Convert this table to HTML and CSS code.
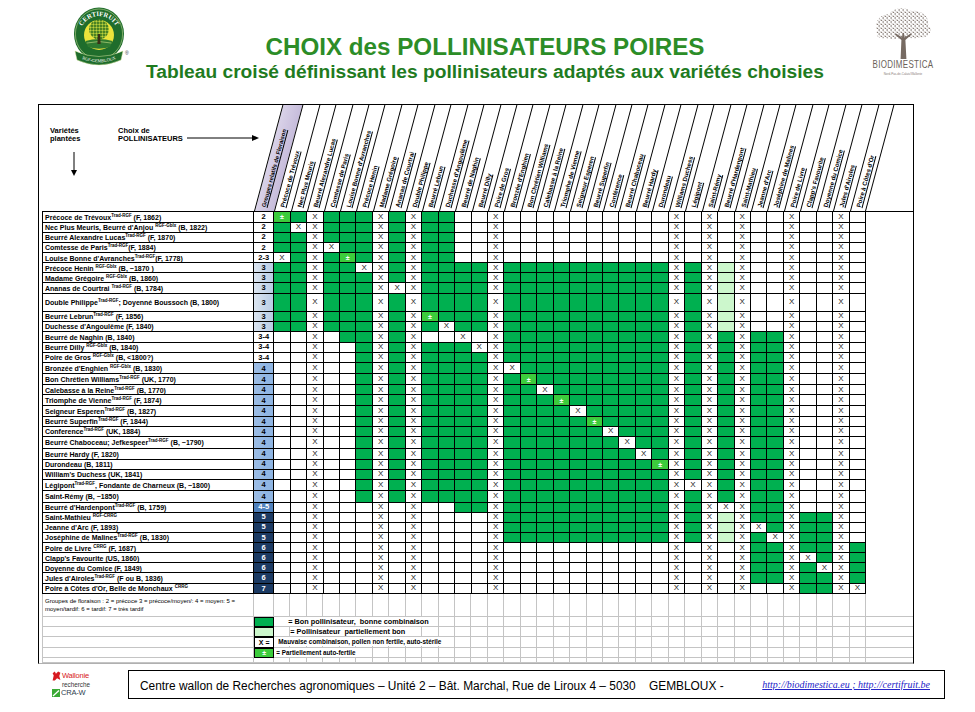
FILE: index.html
```html
<!DOCTYPE html>
<html lang="fr">
<head>
<meta charset="utf-8">
<title>Choix des pollinisateurs poires</title>
<link rel="stylesheet" href="styles.css">
</head>
<body>
<header class="top">
  <div class="logo-cf">
    <svg class="cf" viewBox="0 0 52 60" width="52" height="60">
      <defs>
        <pattern id="lv" width="3" height="3" patternUnits="userSpaceOnUse">
          <rect width="3" height="3" fill="#86ad2e"/>
          <circle cx="1" cy="1" r="0.9" fill="#2f6e1f"/>
          <circle cx="2.3" cy="2.3" r="0.6" fill="#d3dc45"/>
        </pattern>
        <path id="arcT" d="M7 28 A19 19 0 0 1 45 28"/>
        <path id="arcB" d="M8 51.5 Q26 59 44 51.5"/>
      </defs>
      <ellipse cx="26" cy="27" rx="25" ry="26.5" fill="#1f6d2c"/>
      <ellipse cx="26" cy="27" rx="23.6" ry="25" fill="none" stroke="#d9e6a0" stroke-width="0.5"/>
      <circle cx="26" cy="28" r="15" fill="#ebe33b"/>
      <path d="M12.5 34 Q26 30 39.5 34 L37 40 Q26 43.5 15 40 Z" fill="#2e7a30"/>
      <path d="M14 36 Q26 33 38 36" stroke="#cfe08a" stroke-width="0.6" fill="none"/>
      <circle cx="26" cy="22.5" r="10" fill="url(#lv)"/>
      <path d="M25 27 h2 l0.6 10 h-3.2z" fill="#3c3015"/>
      <text font-family="Liberation Serif, serif" font-size="6.6" font-weight="700" fill="#fff"><textPath href="#arcT" startOffset="50%" text-anchor="middle">CERTIFRUIT</textPath></text>
      <path d="M2 44 Q26 55 50 44 L48 53 Q26 63 4 53 Z" fill="#1f6d2c" stroke="#d9e6a0" stroke-width="0.5"/>
      <text font-family="Liberation Serif, serif" font-size="4.4" fill="#fff"><textPath href="#arcB" startOffset="50%" text-anchor="middle">RGF-GEMBLOUX</textPath></text>
    </svg>
    <span class="reg">®</span>
  </div>
  <div class="titles">
    <h1>CHOIX des POLLINISATEURS POIRES</h1>
    <h2>Tableau croisé définissant les pollinisateurs adaptés aux variétés choisies</h2>
  </div>
  <div class="logo-bd">
    <svg class="bd" viewBox="0 0 62 52" width="62" height="52">
      <defs>
        <pattern id="lf" width="4" height="4" patternUnits="userSpaceOnUse">
          <ellipse cx="1.3" cy="1.2" rx="1.1" ry="0.6" fill="#857a72" transform="rotate(30 1.3 1.2)"/>
          <circle cx="3.1" cy="3.1" r="0.75" fill="#6c615a"/>
          <circle cx="3.2" cy="0.8" r="0.4" fill="#9a8f88"/>
        </pattern>
      </defs>
      <path d="M5 24 C1 15 9 7 17 7 C21 1 33 0 39 4 C47 2 58 9 56 17 C62 23 57 32 48 30 C42 33 36 30 31 31 C25 32 20 33 14 31 C7 32 3 29 5 24Z" fill="url(#lf)"/>
      <path d="M28.6 52 L29.4 33 L23 27.5 L24 26.6 L30 30.5 L30.6 26 L32 26 L32.6 30.5 L38.6 26.6 L39.6 27.5 L33.4 33 L34.4 52 Z" fill="#766a62"/>
    </svg>
    <span class="bd-name">BIODIMESTICA</span>
    <span class="bd-tag">Nord-Pas-de-Calais/Wallonie</span>
  </div>
</header>

<main class="sheet">
  <div class="hdr">
    <div class="hname">
      <div class="hv">
        <p>Variétés<br>plantées</p>
        <svg class="down" width="6" height="24" viewBox="0 0 6 24"><path d="M3 0 V19" stroke="#000" stroke-width="1"/><polygon points="0,18 6,18 3,24" fill="#000"/></svg>
      </div>
      <div class="hc">
        <p>Choix de<br>POLLINISATEURS</p>
        <svg class="right" width="72" height="6" viewBox="0 0 72 6"><path d="M0 3 H66" stroke="#000" stroke-width="1"/><polygon points="65,0 72,3 65,6" fill="#000"/></svg>
      </div>
    </div>
    <div class="hcol grp"><i class="slant"></i><span class="lbl">Groupes relatifs de Floraison</span></div>
    <div class="hcol"><i class="slant"></i><span class="lbl">Précoce de Trévoux</span></div>
    <div class="hcol"><i class="slant"></i><span class="lbl">Nec Plus Meuris</span></div>
    <div class="hcol"><i class="slant"></i><span class="lbl">Beurré Alexandre Lucas</span></div>
    <div class="hcol"><i class="slant"></i><span class="lbl">Comtesse de Paris</span></div>
    <div class="hcol"><i class="slant"></i><span class="lbl">Louise Bonne d'Avranches</span></div>
    <div class="hcol"><i class="slant"></i><span class="lbl">Précoce Henin</span></div>
    <div class="hcol"><i class="slant"></i><span class="lbl">Madame Grégoire</span></div>
    <div class="hcol"><i class="slant"></i><span class="lbl">Ananas de Courtrai</span></div>
    <div class="hcol"><i class="slant"></i><span class="lbl">Double Philippe</span></div>
    <div class="hcol"><i class="slant"></i><span class="lbl">Beurré Lebrun</span></div>
    <div class="hcol"><i class="slant"></i><span class="lbl">Duchesse d'Angoulême</span></div>
    <div class="hcol"><i class="slant"></i><span class="lbl">Beurré de Naghin</span></div>
    <div class="hcol"><i class="slant"></i><span class="lbl">Beurré Dilly</span></div>
    <div class="hcol"><i class="slant"></i><span class="lbl">Poire de Gros</span></div>
    <div class="hcol"><i class="slant"></i><span class="lbl">Bronzée d'Enghien</span></div>
    <div class="hcol"><i class="slant"></i><span class="lbl">Bon Chrétien Williams</span></div>
    <div class="hcol"><i class="slant"></i><span class="lbl">Calebasse à la Reine</span></div>
    <div class="hcol"><i class="slant"></i><span class="lbl">Triomphe de Vienne</span></div>
    <div class="hcol"><i class="slant"></i><span class="lbl">Seigneur Esperen</span></div>
    <div class="hcol"><i class="slant"></i><span class="lbl">Beurré Superfin</span></div>
    <div class="hcol"><i class="slant"></i><span class="lbl">Conférence</span></div>
    <div class="hcol"><i class="slant"></i><span class="lbl">Beurré Chaboceau</span></div>
    <div class="hcol"><i class="slant"></i><span class="lbl">Beurré Hardy</span></div>
    <div class="hcol"><i class="slant"></i><span class="lbl">Durondeau</span></div>
    <div class="hcol"><i class="slant"></i><span class="lbl">Williams Duchess</span></div>
    <div class="hcol"><i class="slant"></i><span class="lbl">Légipont</span></div>
    <div class="hcol"><i class="slant"></i><span class="lbl">Saint-Rémy</span></div>
    <div class="hcol"><i class="slant"></i><span class="lbl">Beurré d'Hardenpont</span></div>
    <div class="hcol"><i class="slant"></i><span class="lbl">Saint-Mathieu</span></div>
    <div class="hcol"><i class="slant"></i><span class="lbl">Jeanne d'Arc</span></div>
    <div class="hcol"><i class="slant"></i><span class="lbl">Joséphine de Malines</span></div>
    <div class="hcol"><i class="slant"></i><span class="lbl">Poire de Livre</span></div>
    <div class="hcol"><i class="slant"></i><span class="lbl">Clapp's Favourite</span></div>
    <div class="hcol"><i class="slant"></i><span class="lbl">Doyenne du Comice</span></div>
    <div class="hcol"><i class="slant"></i><span class="lbl">Jules d'Airoles</span></div>
    <div class="hcol last"><i class="slant"></i><span class="lbl">Poire à Côtes d'Or</span></div>
    <div class="hfill"></div>
  </div>

  <div class="body" id="body"></div>

  <div class="legend">
    <div class="lrow l0">
      <div class="lname"><p>Groupes de floraison : 2 = précoce 3 = précoce/moyen/: 4 = moyen: 5 = moyen/tardif: 6 = tardif: 7 = très tardif</p></div>
      <div class="lsw"></div><div class="lm"></div><div class="lf"></div>
    </div>
    <div class="lrow l1">
      <div class="lname"></div><div class="lsw sw-g"></div>
      <div class="lm"><span class="lt t1">= Bon pollinisateur,&nbsp; bonne combinaison</span></div><div class="lf"></div>
    </div>
    <div class="lrow l2">
      <div class="lname"></div><div class="lsw sw-l"></div>
      <div class="lm"><span class="lt t2">= Pollinisateur&nbsp; partiellement bon</span></div><div class="lf"></div>
    </div>
    <div class="lrow l3">
      <div class="lname"></div><div class="lsw sw-x">X =</div>
      <div class="lm"><span class="lt t3">Mauvaise combinaison, pollen non fertile, auto-stérile</span></div><div class="lf"></div>
    </div>
    <div class="lrow l4">
      <div class="lname"></div><div class="lsw sw-p">±</div>
      <div class="lm"><span class="lt t4">= Partiellement auto-fertile</span></div><div class="lf"></div>
    </div>
    <div class="lrow l5">
      <div class="lname"></div><div class="lsw"></div><div class="lm"></div><div class="lf"></div>
    </div>
  </div>
</main>

<footer class="foot">
  <div class="wal">
    <div class="w1"><svg width="9" height="10" viewBox="0 0 8 9"><path d="M0.5 8.5 L1.5 4 L0.5 2 L2.5 0.5 L3.5 2.5 L5.5 0.5 L7.5 1.5 L6.5 4.5 L7.5 8 L4.5 6.5 L2.5 8.5 Z" fill="#d71920"/></svg><span>Wallonie</span></div>
    <div class="w2">recherche</div>
    <div class="w3"><svg width="8" height="8" viewBox="0 0 8 8"><rect width="8" height="8" fill="#3aa935"/><path d="M1 7 L7 1.5" stroke="#fff" stroke-width="1.3"/></svg><span>CRA-W</span></div>
  </div>
  <div class="addr">
    <span class="atext">Centre wallon de Recherches agronomiques – Unité 2 – Bât. Marchal, Rue de Liroux 4 – 5030&nbsp;&nbsp;&nbsp; GEMBLOUX -</span>
    <span class="links">http://biodimestica.eu ; http://certifruit.be</span>
  </div>
</footer>

<script src="script.js"></script>
</body>
</html>
```

FILE: styles.css
```css
* { box-sizing: border-box; margin: 0; padding: 0; }

body {
  width: 975px;
  height: 712px;
  overflow: hidden;
  background: #fff;
  color: #000;
  font-family: "Liberation Sans", Arial, sans-serif;
}

/* ---------- top band ---------- */
.top { display: flex; height: 104px; }

.logo-cf { flex: none; display: flex; width: 58px; margin: 7px 0 0 73px; }
.logo-cf .cf { display: block; flex: none; }
.reg { font-size: 5px; color: #333; margin-top: 43px; }

.titles { flex: 1; text-align: center; padding-right: 32px; white-space: nowrap; }
.titles h1 {
  margin-top: 34px;
  font-weight: 700;
  font-size: 24.2px;
  line-height: 25px;
  color: #2c8d27;
}
.titles h2 {
  margin-top: 1.5px;
  font-weight: 700;
  font-size: 19.2px;
  line-height: 21px;
  color: #1f7b1f;
}

.logo-bd { flex: none; width: 64px; margin: 7px 40px 0 0; display: flex; flex-direction: column; align-items: center; }
.bd { display: block; }
.bd-name {
  display: inline-block;
  margin-top: 2px;
  font-size: 8px;
  line-height: 8px;
  letter-spacing: 0.3px;
  color: #6a5f58;
  transform: scaleY(1.45);
}
.bd-tag { margin-top: 3px; font-size: 3px; line-height: 4px; color: #8a807a; white-space: nowrap; }

/* ---------- sheet ---------- */
.sheet {
  margin-left: 38px;
  width: 876px;
  height: 560px;
  border: 1px solid #000;
  border-bottom-color: #b0b0b0;
  display: flex;
  flex-direction: column;
}

.hdr { flex: none; display: flex; height: 106px; }

.hname {
  flex: none;
  width: 215px;
  display: flex;
  padding: 22px 0 0 11px;
  font-weight: 700;
  font-size: 7.5px;
  line-height: 7.5px;
}
.hv { flex: none; width: 68px; }
.hv .down { display: block; margin: 10px 0 0 21px; }
.hc { flex: none; display: flex; align-items: flex-start; }
.hc p { white-space: nowrap; }
.hc .right { flex: none; display: block; margin: 8px 0 0 4px; }

.hcol {
  flex: none;
  width: 16.45px;
  display: grid;
  grid-template-columns: minmax(0, 1fr);
  grid-template-rows: minmax(0, 1fr);
}
.hcol.grp { width: 20.3px; }
.slant {
  grid-area: 1 / 1;
  border-left: 1px solid #000;
  transform: skewX(-15deg);
  transform-origin: 0 100%;
}
.grp .slant { background: linear-gradient(to right, #d9d2e8, #c6bcdb); }
.hcol.last .slant { border-right: 1px solid #000; }
.lbl {
  grid-area: 1 / 1;
  align-self: end;
  justify-self: start;
  display: block;
  width: 0;
  white-space: nowrap;
  font-size: 6.2px;
  font-weight: 700;
  line-height: 7px;
  text-decoration: underline;
  transform-origin: 0 100%;
  transform: translate(11.5px, -3px) rotate(-75deg);
}
.grp .lbl { font-size: 5.8px; transform: translate(13.5px, -3px) rotate(-75deg); }
.hfill { flex: 1; }

/* ---------- body grid ---------- */
.body { flex: none; margin-left: 3px; border-top: 1px solid #000; }

.row {
  display: grid;
  grid-template-columns: 212px 20.3px repeat(36, 16.45px) 1fr;
}
.c {
  border-right: 1px solid #000;
  border-bottom: 1px solid #000;
  display: flex;
  align-items: center;
  justify-content: center;
  overflow: hidden;
  font-size: 8px;
  line-height: 1;
  color: #222;
}
.nm {
  border-left: 1px solid #000;
  justify-content: flex-start;
  padding: 1px 0 0 2px;
  font-size: 7px;
  font-weight: 700;
  color: #000;
  white-space: nowrap;
}
.nm sup { font-size: 4.5px; vertical-align: 3px; line-height: 0; font-weight: 700; }
.gp { font-size: 7.5px; font-weight: 700; color: #000; }
.gp.b1 { background: linear-gradient(to right, #dbe5f1, #b9cde5); }
.gp.b2 { background: linear-gradient(to right, #9cbde6, #8db4e2); }
.gp.b3 { background: #4f81bd; color: #fff; }
.gp.b4 { background: #1b3a63; color: #fff; }
.g { background: #00b050; }
.l { background: #ccf7cc; }
.p { background: #3ccc3c; color: #fff; font-weight: 700; font-size: 7px; }
.fl { border: none; }

/* ---------- legend ---------- */
.legend { flex: 1; margin-left: 3px; display: flex; flex-direction: column; }
.lrow { flex: none; display: grid; grid-template-columns: 212px 20.3px 592.2px 1fr; }
.lrow > div { border-bottom: 1px solid #c4c4c4; }
.l0 { height: 22.7px; }
.l1 { height: 10px; }
.l2 { height: 10px; }
.l3 { height: 10.7px; }
.l4 { height: 10.3px; }
.l5 { flex: 1; }
.lname { border-left: 1px solid #c4c4c4; border-right: 1px solid #c4c4c4; }
.lname p { padding: 4px 0 0 2px; font-size: 6px; line-height: 7.5px; }
.lsw { border-right: 1px solid #c4c4c4; display: flex; align-items: center; justify-content: center; font-size: 7px; font-weight: 700; }
.lrow > .sw-g { background: #00b050; border: 1px solid #000; }
.lrow > .sw-l { background: #ccf7cc; border: 1px solid #000; }
.lrow > .sw-x { background: #fff; border: 1px solid #000; }
.lrow > .sw-p { background: #3ccc3c; color: #fff; border: 1px solid #000; }
.lm {
  display: flex;
  align-items: center;
  background: repeating-linear-gradient(to right, transparent 0, transparent 15.45px, #c4c4c4 15.45px, #c4c4c4 16.45px);
}
.lt { background: #fff; font-weight: 700; white-space: nowrap; line-height: 9px; padding-right: 3px; }
.t1 { margin-left: 14px; font-size: 7.3px; }
.t2 { margin-left: 16px; font-size: 7.3px; }
.t3 { margin-left: 4px; font-size: 6.4px; }
.t4 { margin-left: 2px; font-size: 6.3px; }

/* ---------- footer ---------- */
.foot { display: flex; align-items: center; margin-top: 6px; height: 29px; }
.wal { flex: none; width: 38px; margin-left: 52px; display: flex; flex-direction: column; }
.w1 { display: flex; align-items: center; gap: 1px; color: #d71920; font-size: 7.5px; line-height: 10px; letter-spacing: -0.2px; }
.w2 { margin-left: 10px; font-size: 6.3px; line-height: 7px; color: #333; }
.w3 { display: flex; align-items: center; gap: 1px; font-size: 7.5px; line-height: 10px; color: #2d3b4e; letter-spacing: -0.2px; }
.addr {
  flex: none;
  width: 817px;
  height: 29px;
  margin-left: 38px;
  border: 1px solid #000;
  display: flex;
  align-items: center;
  padding: 0 14px 0 11px;
}
.atext {
  flex: none;
  display: inline-block;
  width: 580px;
  white-space: nowrap;
  font-size: 11.9px;
  transform: scaleY(1.15);
}
.links {
  margin-left: auto;
  font-family: "Liberation Serif", "Times New Roman", serif;
  font-style: italic;
  font-size: 10px;
  color: #2323c8;
  text-decoration: underline;
  white-space: nowrap;
}
```

FILE: script.js
```js
(function () {
  var T = '<sup>Trad-RGF</sup>', G = '<sup>RGF-Gblx</sup>', C = '<sup>CRRG</sup>';
  var names = [
    'Précoce de Trévoux' + T + ' (F, 1862)',
    'Nec Plus Meuris, Beurré d\'Anjou ' + G + ' (B, 1822)',
    'Beurré Alexandre Lucas' + T + ' (F, 1870)',
    'Comtesse de Paris' + T + '(F, 1884)',
    'Louise Bonne d\'Avranches' + T + '(F, 1778)',
    'Précoce Henin ' + G + ' (B, ~1870 )',
    'Madame Grégoire ' + G + ' (B, 1860)',
    'Ananas de Courtrai ' + T + ' (B, 1784)',
    'Double Philippe' + T + '; Doyenné Boussoch (B, 1800)',
    'Beurré Lebrun' + T + ' (F, 1856)',
    'Duchesse d\'Angoulême (F, 1840)',
    'Beurré de Naghin (B, 1840)',
    'Beurré Dilly ' + G + ' (B, 1840)',
    'Poire de Gros ' + G + ' (B, &lt;1800?)',
    'Bronzée d\'Enghien ' + G + ' (B, 1830)',
    'Bon Chrétien Williams' + T + ' (UK, 1770)',
    'Calebasse à la Reine' + T + ' (B, 1770)',
    'Triomphe de Vienne' + T + ' (F, 1874)',
    'Seigneur Esperen' + T + ' (B, 1827)',
    'Beurré Superfin' + T + ' (F, 1844)',
    'Conference' + T + ' (UK, 1884)',
    'Beurré Chaboceau; Jefkespeer' + T + ' (B, ~1790)',
    'Beurré Hardy (F, 1820)',
    'Durondeau (B, 1811)',
    'William\'s Duchess (UK, 1841)',
    'Légipont' + T + ', Fondante de Charneux (B, ~1800)',
    'Saint-Rémy (B, ~1850)',
    'Beurré d\'Hardenpont' + T + ' (B, 1759)',
    'Saint-Mathieu <sup>RGF-CRRG</sup>',
    'Jeanne d\'Arc (F, 1893)',
    'Joséphine de Malines' + T + ' (B, 1830)',
    'Poire de Livre ' + C + ' (F, 1687)',
    'Clapp\'s Favourite (US, 1860)',
    'Doyenne du Comice (F, 1849)',
    'Jules d\'Airoles' + T + ' (F ou B, 1836)',
    'Poire à Côtes d\'Or, Belle de Monchaux ' + C
  ];
  var groups = ['2','2','2','2','2-3','3','3','3','3','3','3','3-4','3-4','3-4',
    '4','4','4','4','4','4','4','4','4','4','4','4','4','4-5','5','5','5','6','6','6','6','7'];
  var heights = [10.7,10,10,10.6,10,10,10,10.4,18.3,10,10,10.7,10,10.6,11,11,10,11.2,
    10.5,10,10,11.7,11,10,10,11.6,11.4,10,10,10,10.6,10,10,10,10.4,10.6];
  var M = [
    'pgxggg' + 'xgxgg.' + '.x....' + '......' + 'x.x.x.' + '.x..x.',
    'gxxggg' + 'xgxgg.' + '.x....' + '......' + 'x.x.x.' + '.x..x.',
    'ggxggg' + 'xgxgg.' + '.x....' + '......' + 'x.x.x.' + '.x..x.',
    'ggxxgg' + 'xgxgg.' + '.x....' + '......' + 'x.x.x.' + '.x..x.',
    'xgxgpg' + 'xgxgg.' + '.x....' + '......' + 'x.x.x.' + '.x..x.',
    'ggxggx' + 'xgxggg' + 'gxgggg' + 'gggggg' + 'xgxlx.' + '.x..x.',
    'ggxggg' + 'xgxggg' + 'gxgggg' + 'gggggg' + 'xgxlx.' + '.x..x.',
    'ggxggg' + 'xxxggg' + 'gxgggg' + 'gggggg' + 'xgxlx.' + '.x..x.',
    'ggxggg' + 'xgxggg' + 'gxgggg' + 'gggggg' + 'xgxlx.' + '.x..x.',
    'ggxggg' + 'xgxpgg' + 'gxgggg' + 'gggggg' + 'xgxlx.' + '.x..x.',
    'ggxggg' + 'xgxgxg' + 'gxgggg' + 'gggggg' + 'xgxlx.' + '.x..x.',
    '..x.gg' + 'xgx..x' + '.xgggg' + 'gggggg' + 'xgxgxg' + 'gx..x.',
    '..x..g' + 'xgxggg' + 'xxgggg' + 'gggggg' + 'xgxgxg' + 'gx..x.',
    '..x..g' + 'xgxggg' + 'gxgggg' + 'gggggg' + 'xgxgxg' + 'gx..x.',
    '..x..g' + 'xgxggg' + 'gxxggg' + 'gggggg' + 'xgxgxg' + 'gx..x.',
    '..x..g' + 'xgxggg' + 'gxgpgg' + 'gggggg' + 'xgxgxg' + 'gx..x.',
    '..x..g' + 'xgxggg' + 'gxggxg' + 'gggggg' + 'xgxgxg' + 'gx..x.',
    '..x..g' + 'xgxggg' + 'gxgggp' + 'gggggg' + 'xgxgxg' + 'gx..x.',
    '..x..g' + 'xgxggg' + 'gxgggg' + 'xggggg' + 'xgxgxg' + 'gx..x.',
    '..x..g' + 'xgxggg' + 'gxgggg' + 'gpgggg' + 'xgxgxg' + 'gx..x.',
    '..x..g' + 'xgxggg' + 'gxgggg' + 'ggxggg' + 'xgxgxg' + 'gx..x.',
    '..x..g' + 'xgxggg' + 'gxgggg' + 'gggxgg' + 'xgxgxg' + 'gx..x.',
    '..x..g' + 'xgxggg' + 'gxgggg' + 'ggggxg' + 'xgxgxg' + 'gx..x.',
    '..x..g' + 'xgxggg' + 'gxgggg' + 'gggggp' + 'xgxgxg' + 'gx..x.',
    '..x..g' + 'xgxggg' + 'gxgggg' + 'gggggg' + 'xgxgxg' + 'gx..x.',
    '..x..g' + 'xgxggg' + 'gxgggg' + 'gggggg' + 'xxxgxg' + 'gx..x.',
    '..x..g' + 'xgxggg' + 'gxgggg' + 'gggggg' + 'xgxgxg' + 'gx..x.',
    '..x...' + 'x.x..g' + 'gxgggg' + 'gggggg' + 'xgxxxg' + 'gx..x.',
    '..x...' + 'x.x...' + '.xgggg' + 'gggggg' + 'xgxlxg' + 'gxggx.',
    '..x...' + 'x.x...' + '.xgggg' + 'gggggg' + 'xgxlxx' + 'gxggx.',
    '..x...' + 'x.x...' + '.xgggg' + 'gggggg' + 'xgxlxg' + 'xxggx.',
    '..x...' + 'x.x...' + '.x....' + '......' + 'x.x.xg' + 'gxggxg',
    '..x...' + 'x.x...' + '.x....' + '......' + 'x.x.xg' + 'gxxgxg',
    '..x...' + 'x.x...' + '.x....' + '......' + 'x.x.xg' + 'gxgxxg',
    '..x...' + 'x.x...' + '.x....' + '......' + 'x.x.xg' + 'gxggxg',
    '..x...' + 'x.x...' + '.x....' + '......' + 'x.x.x.' + '.xggxx'
  ];
  function gcls(i) {
    if (i < 5) return '';
    if (i < 11) return 'b1';
    if (i < 14) return '';
    if (i < 27) return 'b2';
    if (i === 27) return 'b3';
    return 'b4';
  }
  var body = document.getElementById('body');
  for (var i = 0; i < names.length; i++) {
    var r = document.createElement('div');
    r.className = 'row';
    r.style.height = heights[i] + 'px';
    var h = '<div class="c nm"><span>' + names[i] + '</span></div>' +
            '<div class="c gp ' + gcls(i) + '">' + groups[i] + '</div>';
    var s = M[i];
    for (var k = 0; k < s.length; k++) {
      var ch = s.charAt(k);
      if (ch === 'g') h += '<div class="c g"></div>';
      else if (ch === 'l') h += '<div class="c l"></div>';
      else if (ch === 'x') h += '<div class="c x">X</div>';
      else if (ch === 'p') h += '<div class="c p">±</div>';
      else h += '<div class="c"></div>';
    }
    h += '<div class="fl"></div>';
    r.innerHTML = h;
    body.appendChild(r);
  }
})();
```
